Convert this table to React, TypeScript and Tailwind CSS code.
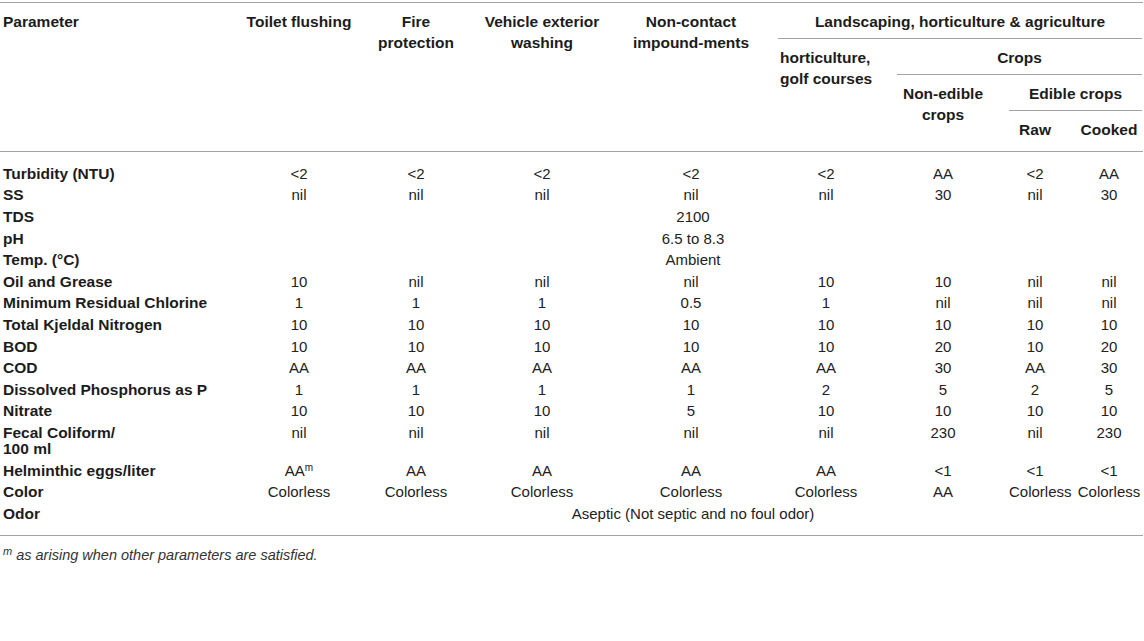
import React from 'react';

type Row = {
  label: React.ReactNode;
  values?: React.ReactNode[];
  span?: string;
};

const AAm = (
  <>
    AA<sup className="text-[10px] -top-[0.45em]">m</sup>
  </>
);

const rows: Row[] = [
  { label: 'Turbidity (NTU)', values: ['<2', '<2', '<2', '<2', '<2', 'AA', '<2', 'AA'] },
  { label: 'SS', values: ['nil', 'nil', 'nil', 'nil', 'nil', '30', 'nil', '30'] },
  { label: 'TDS', span: '2100' },
  { label: 'pH', span: '6.5 to 8.3' },
  { label: 'Temp. (°C)', span: 'Ambient' },
  { label: 'Oil and Grease', values: ['10', 'nil', 'nil', 'nil', '10', '10', 'nil', 'nil'] },
  { label: 'Minimum Residual Chlorine', values: ['1', '1', '1', '0.5', '1', 'nil', 'nil', 'nil'] },
  { label: 'Total Kjeldal Nitrogen', values: ['10', '10', '10', '10', '10', '10', '10', '10'] },
  { label: 'BOD', values: ['10', '10', '10', '10', '10', '20', '10', '20'] },
  { label: 'COD', values: ['AA', 'AA', 'AA', 'AA', 'AA', '30', 'AA', '30'] },
  { label: 'Dissolved Phosphorus as P', values: ['1', '1', '1', '1', '2', '5', '2', '5'] },
  { label: 'Nitrate', values: ['10', '10', '10', '5', '10', '10', '10', '10'] },
  {
    label: (
      <>
        Fecal Coliform/
        <br />
        100 ml
      </>
    ),
    values: ['nil', 'nil', 'nil', 'nil', 'nil', '230', 'nil', '230'],
  },
  { label: 'Helminthic eggs/liter', values: [AAm, 'AA', 'AA', 'AA', 'AA', '<1', '<1', '<1'] },
  {
    label: 'Color',
    values: ['Colorless', 'Colorless', 'Colorless', 'Colorless', 'Colorless', 'AA', 'Colorless', 'Colorless'],
  },
  { label: 'Odor', span: 'Aseptic (Not septic and no foul odor)' },
];

function BodyRow({ row, first, last }: { row: Row; first: boolean; last: boolean }) {
  // extra breathing room above the first and below the last body row
  const pad = first ? 'pt-[13.8px] pb-[2.8px]' : last ? 'pt-[2.8px] pb-[13px]' : 'py-[2.8px]';

  return (
    <tr>
      <td className={`${pad} pl-[3px] text-left align-top font-bold text-[15.5px] text-[#1c1c1c]`}>
        {row.label}
      </td>
      {row.span ? (
        <td colSpan={8} className={`${pad} align-top text-center`}>
          {row.span}
        </td>
      ) : (
        row.values!.map((v, i) => (
          <td
            key={i}
            className={`${pad} align-top text-center ${i === 7 ? 'pl-[16px] pr-[2px]' : ''}`}
          >
            {v}
          </td>
        ))
      )}
    </tr>
  );
}

export default function App() {
  const line = 'border-[#a3a3a3]';

  return (
    <div className="w-[1144px] h-[641px] bg-white font-['Liberation_Sans',Arial,sans-serif] text-[#222]">
      <div className={`mt-[2px] w-[1143px] border-y ${line}`}>
        <table className="w-[1143px] table-fixed">
          <colgroup>
            <col className="w-[243px]" />
            <col className="w-[112px]" />
            <col className="w-[122px]" />
            <col className="w-[130px]" />
            <col className="w-[168px]" />
            <col className="w-[102px]" />
            <col className="w-[132px]" />
            <col className="w-[52px]" />
            <col className="w-[82px]" />
          </colgroup>
          <thead className="font-bold text-[15.5px] leading-[21px] text-[#1c1c1c]">
            <tr>
              <th rowSpan={4} className={`pl-[3px] pt-2 text-left align-top border-b ${line}`}>
                Parameter
              </th>
              <th rowSpan={4} className={`pt-2 text-center align-top border-b ${line}`}>
                Toilet flushing
              </th>
              <th rowSpan={4} className={`pt-2 text-center align-top border-b ${line}`}>
                Fire
                <br />
                protection
              </th>
              <th rowSpan={4} className={`pt-2 text-center align-top border-b ${line}`}>
                Vehicle exterior
                <br />
                washing
              </th>
              <th rowSpan={4} className={`pt-2 text-center align-top border-b ${line}`}>
                Non-contact
                <br />
                impound-ments
              </th>
              <th colSpan={4} className="p-0 align-top">
                <div className={`ml-[3px] mr-[1px] pt-2 pb-[6px] text-center border-b ${line}`}>
                  Landscaping, horticulture &amp; agriculture
                </div>
              </th>
            </tr>
            <tr>
              <th rowSpan={3} className={`pl-[5px] pt-2 text-left align-top border-b ${line}`}>
                horticulture,
                <br />
                golf courses
              </th>
              <th colSpan={3} className="p-0 align-top">
                <div className={`ml-[20px] mr-[1px] pt-2 pb-[6px] text-center border-b ${line}`}>
                  Crops
                </div>
              </th>
            </tr>
            <tr>
              <th rowSpan={2} className={`pt-2 text-center align-top border-b ${line}`}>
                Non-edible
                <br />
                crops
              </th>
              <th colSpan={2} className="p-0 align-top">
                <div className={`mr-[1px] pt-2 pb-[6px] text-center border-b ${line}`}>Edible crops</div>
              </th>
            </tr>
            <tr>
              <th className={`pt-2 pb-[11px] text-center align-top border-b ${line}`}>Raw</th>
              <th className={`pl-[16px] pr-[2px] pt-2 pb-[11px] text-center align-top border-b ${line}`}>
                Cooked
              </th>
            </tr>
          </thead>
          <tbody className="text-[15px] leading-[16px]">
            {rows.map((r, i) => (
              <BodyRow key={i} row={r} first={i === 0} last={i === rows.length - 1} />
            ))}
          </tbody>
        </table>
      </div>
      <p className="pl-[3px] pt-[11px] italic text-[14.5px] leading-[17px] text-[#333]">
        <sup className="text-[11px] -top-[0.4em]">m</sup> as arising when other parameters are satisfied.
      </p>
    </div>
  );
}
